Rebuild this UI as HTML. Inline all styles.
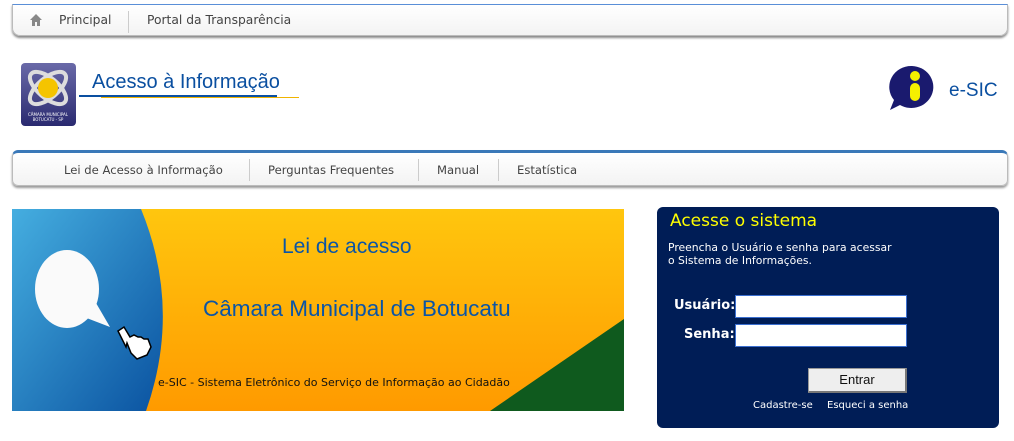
<!DOCTYPE html>
<html><head><meta charset="utf-8"><style>
body{margin:0;width:1014px;height:441px;background:#fff;font-family:"DejaVu Sans","Liberation Sans",sans-serif;position:relative;overflow:hidden}
.abs{position:absolute}
.bar{position:absolute;left:12px;width:994px;background:linear-gradient(#fff,#f3f3f3);border:1px solid #bbb;border-radius:0 0 8px 8px;box-shadow:0 2px 2px #888;font-size:12.3px;color:#444}
.bar span{position:absolute;top:0}
.sep{position:absolute;width:1px;background:#ccc}
</style></head><body>
<div class="bar" style="top:4px;height:30px;border-top:1px solid #5a8fd8">
 <svg class="abs" style="left:17px;top:9px" width="12" height="12" viewBox="0 0 12 12"><path d="M6 0L0 6h2v6h3V8h2v4h3V6h2z" fill="#888"/></svg>
 <span style="left:46px;top:8px">Principal</span>
 <div class="sep" style="left:115px;top:6px;height:22px"></div>
 <span style="left:134px;top:8px">Portal da Transparência</span>
</div>
<div class="abs" style="left:21px;top:63px;width:55px;height:63px;border-radius:4px;background:linear-gradient(#6a6aa8,#2a2a70)">
 <svg width="55" height="63" viewBox="0 0 55 63"><ellipse cx="27" cy="25" rx="22" ry="10" fill="none" stroke="#ddd" stroke-width="4" transform="rotate(40 27 25)"/><ellipse cx="27" cy="25" rx="22" ry="10" fill="none" stroke="#ddd" stroke-width="4" transform="rotate(-40 27 25)"/><circle cx="27" cy="25" r="10" fill="#f5c400"/><text x="27" y="53" font-size="4" fill="#fff" text-anchor="middle">CÂMARA MUNICIPAL</text><text x="27" y="58" font-size="4" fill="#fff" text-anchor="middle">BOTUCATU - SP</text></svg>
</div>
<div class="abs" style="left:92px;top:71px;font-family:'Liberation Sans',sans-serif;font-size:20px;color:#0a4fa0">Acesso à Informação</div>
<div class="abs" style="left:79px;top:95px;width:198px;height:2px;background:#0a4fa0"></div>
<div class="abs" style="left:101px;top:97px;width:198px;height:1px;background:#f0b400"></div>
<svg class="abs" style="left:888px;top:64px" width="50" height="48" viewBox="0 0 50 48"><path d="M24 2a22 21 0 1 1-12 39l-10 5 4-10A22 21 0 0 1 24 2z" fill="#1a1a6e"/><circle cx="27" cy="12" r="5" fill="#f5f000"/><rect x="22" y="19" width="10" height="18" rx="5" fill="#f5f000"/></svg>
<div class="abs" style="left:949px;top:80px;font-family:'Liberation Sans',sans-serif;font-size:19px;color:#0a4fa0">e-SIC</div>
<div class="bar" style="top:150px;height:32px;border:1px solid #bbb;border-top:3px solid #3a78b8;border-radius:6px;box-shadow:0 2px 2px #999;font-size:11.6px">
 <span style="left:51px;top:10px">Lei de Acesso à Informação</span>
 <div class="sep" style="left:236px;top:6px;height:22px"></div>
 <span style="left:255px;top:10px">Perguntas Frequentes</span>
 <div class="sep" style="left:405px;top:6px;height:22px"></div>
 <span style="left:424px;top:10px">Manual</span>
 <div class="sep" style="left:485px;top:6px;height:22px"></div>
 <span style="left:504px;top:10px">Estatística</span>
</div>
<div class="abs" style="left:12px;top:209px;width:612px;height:202px;overflow:hidden;background:linear-gradient(#ffc60e,#ff9a00)">
 <svg class="abs" style="left:0;top:0" width="612" height="202"><defs><linearGradient id="b" x1="0" y1="0" x2="1" y2="1"><stop offset="0" stop-color="#45aee0"/><stop offset="1" stop-color="#0a52a0"/></linearGradient></defs>
 <path d="M0 0H129Q170 100 134 202H0z" fill="url(#b)"/>
 <path d="M612 110V202H478z" fill="#0f5a1e"/>
 <ellipse cx="55" cy="80" rx="32" ry="39" fill="#fafafa"/><path d="M72 108l26 10-14-24z" fill="#fafafa"/>
 <path d="M106 122l8 16 1-4 4 10 6 6 10-4 4-8-3-8-4 0-3-2-3 0-4-2-4 2-6-10z" fill="#fff" stroke="#000" stroke-width="1.5"/>
 </svg>
 <div class="abs" style="left:270px;top:26px;font-family:'Liberation Sans',sans-serif;font-size:21px;color:#0b55a6">Lei de acesso</div>
 <div class="abs" style="left:191px;top:87px;font-family:'Liberation Sans',sans-serif;font-size:22.5px;color:#0b55a6">Câmara Municipal de Botucatu</div>
 <div class="abs" style="left:146px;top:167px;font-size:11px;color:#111">e-SIC - Sistema Eletrônico do Serviço de Informação ao Cidadão</div>
</div>
<div class="abs" style="left:657px;top:207px;width:342px;height:221px;background:#001d56;border-radius:6px;color:#fff">
 <div class="abs" style="left:13px;top:4px;font-size:17px;color:#ffff00">Acesse o sistema</div>
 <div class="abs" style="left:11px;top:34px;font-size:10.8px;line-height:13px">Preencha o Usuário e senha para acessar<br>o Sistema de Informações.</div>
 <div class="abs" style="left:17px;top:91px;font-size:13px;font-weight:bold">Usuário:</div>
 <div class="abs" style="left:27px;top:120px;font-size:13px;font-weight:bold">Senha:</div>
 <div class="abs" style="left:78px;top:88px;width:170px;height:21px;background:#fff;border:1px solid #3b6fd0"></div>
 <div class="abs" style="left:78px;top:117px;width:170px;height:21px;background:#fff;border:1px solid #3b6fd0"></div>
 <div class="abs" style="left:151px;top:161px;width:99px;height:25px;background:#eee;border:1px solid #999;border-right:2px solid #777;border-bottom:2px solid #777;box-sizing:border-box;color:#111;font-family:'Liberation Sans',sans-serif;font-size:13px;text-align:center;line-height:22px">Entrar</div>
 <div class="abs" style="left:96px;top:193px;font-size:10px">Cadastre-se</div>
 <div class="abs" style="left:170px;top:193px;font-size:10px">Esqueci a senha</div>
</div>
</body></html>
